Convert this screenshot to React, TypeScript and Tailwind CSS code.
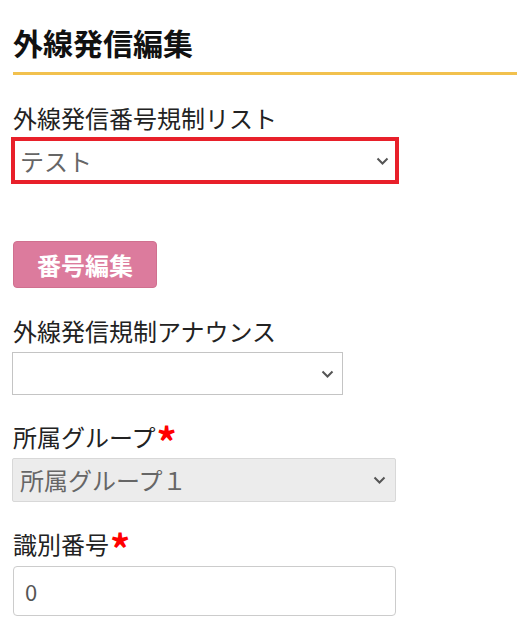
const font = { fontFamily: '"Noto Sans CJK JP", "Noto Sans", sans-serif' };

function Chevron() {
  return (
    <svg width="13" height="8" viewBox="0 0 13 8" className="shrink-0">
      <polyline points="1.5,1.5 6.5,6.5 11.5,1.5" fill="none" stroke="#555" strokeWidth="2" />
    </svg>
  );
}

function Label({ text, required }: { text: string; required?: boolean }) {
  return (
    <div className="flex items-start h-[30px] text-[24px] text-[#222] leading-[30px]">
      <span>{text}</span>
      {required && (
        <span className="text-[#ff0000] font-bold text-[40px] leading-[30px] h-[30px] ml-[1px] mt-[4px]">*</span>
      )}
    </div>
  );
}

export default function App() {
  return (
    <div className="bg-white min-h-[634px] pt-[22px] pl-[13px]" style={font}>
      <div className="border-b-[3px] border-[#f2c14e] pb-[10px]">
        <h1 className="text-[30px] font-bold leading-[40px] text-[#111]">外線発信編集</h1>
      </div>

      <div className="mt-[28px]">
        <Label text="外線発信番号規制リスト" />
        <div className="mt-[4px] -ml-[2px] w-[388px] h-[47px] border-[4px] border-[#e8202a] flex items-center justify-between pl-[5px] pr-[6px]">
          <span className="text-[24px] text-[#666]">テスト</span>
          <Chevron />
        </div>
      </div>

      <button className="mt-[57px] w-[144px] h-[47px] rounded-[4px] bg-[#dc7b9d] border border-[#d0708f] text-white font-bold text-[24px] flex items-center justify-center">
        番号編集
      </button>

      <div className="mt-[28px]">
        <Label text="外線発信規制アナウンス" />
        <div className="mt-[6px] -ml-[1px] w-[331px] h-[43px] border border-[#c4c4c4] flex items-center justify-end pr-[8px]">
          <Chevron />
        </div>
      </div>

      <div className="mt-[27px]">
        <Label text="所属グループ" required />
        <div className="mt-[6px] -ml-[1px] w-[384px] h-[44px] border border-[#d8d8d8] rounded-[2px] bg-[#ececec] flex items-center justify-between pl-[7px] pr-[9px]">
          <span className="text-[24px] text-[#666]">所属グループ１</span>
          <Chevron />
        </div>
      </div>

      <div className="mt-[27px]">
        <Label text="識別番号" required />
        <div className="mt-[7px] w-[383px] h-[50px] border border-[#cccccc] rounded-[4px] flex items-center pl-[11px]">
          <span className="text-[22px] text-[#555]">0</span>
        </div>
      </div>
    </div>
  );
}
